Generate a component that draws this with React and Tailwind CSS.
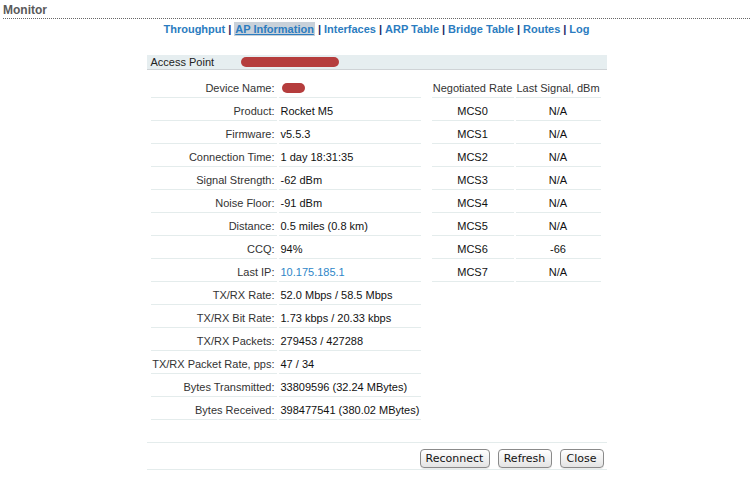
const navItems = ['Throughput', 'AP Information', 'Interfaces', 'ARP Table', 'Bridge Table', 'Routes', 'Log'];

const rows = [
  { label: 'Device Name:', value: null, redacted: true },
  { label: 'Product:', value: 'Rocket M5' },
  { label: 'Firmware:', value: 'v5.5.3' },
  { label: 'Connection Time:', value: '1 day 18:31:35' },
  { label: 'Signal Strength:', value: '-62 dBm' },
  { label: 'Noise Floor:', value: '-91 dBm' },
  { label: 'Distance:', value: '0.5 miles (0.8 km)' },
  { label: 'CCQ:', value: '94%' },
  { label: 'Last IP:', value: '10.175.185.1', link: true },
  { label: 'TX/RX Rate:', value: '52.0 Mbps / 58.5 Mbps' },
  { label: 'TX/RX Bit Rate:', value: '1.73 kbps / 20.33 kbps' },
  { label: 'TX/RX Packets:', value: '279453 / 427288' },
  { label: 'TX/RX Packet Rate, pps:', value: '47 / 34' },
  { label: 'Bytes Transmitted:', value: '33809596 (32.24 MBytes)' },
  { label: 'Bytes Received:', value: '398477541 (380.02 MBytes)' },
];

const rates = [
  ['MCS0', 'N/A'],
  ['MCS1', 'N/A'],
  ['MCS2', 'N/A'],
  ['MCS3', 'N/A'],
  ['MCS4', 'N/A'],
  ['MCS5', 'N/A'],
  ['MCS6', '-66'],
  ['MCS7', 'N/A'],
];

const cell = 'h-[23px] border-b border-[#e4ecec] pt-[6px] leading-[14px] whitespace-nowrap';

const Button = ({ children, width }) => (
  <button
    className={`h-[19px] ${width} rounded-[4px] border border-[#8a8a8a] bg-gradient-to-b from-white to-[#e4e4e4] text-[11px] leading-[17px] text-[#111] shadow-[0_1px_0_rgba(0,0,0,0.08)] [font-family:'DejaVu_Sans',sans-serif]`}
  >
    {children}
  </button>
);

export default function App() {
  return (
    <div className="w-[753px] h-[479px] bg-white text-[11px] text-[#222] [font-family:'Liberation_Sans',Arial,sans-serif]">
      {/* Title */}
      <div className="mx-[3px] pt-[3px] border-b border-dotted border-[#666]">
        <div className="text-[12px] font-bold leading-[15px] text-[#5a5a5a]">Monitor</div>
      </div>

      {/* Sub nav */}
      <div className="mt-[3px] flex justify-center text-[11px] font-bold leading-[14px] text-[#2b7cc0]">
        {navItems.map((item, i) => (
          <span key={item} className="flex items-center">
            {i > 0 && <span className="mx-[3px] text-[#1c2a66]">|</span>}
            {item === 'AP Information' ? (
              <span className="bg-[#c9d1d9] px-[1px] underline">{item}</span>
            ) : (
              <span>{item}</span>
            )}
          </span>
        ))}
      </div>

      <div className="mx-auto mt-[19px] w-[460px]">
        {/* Section header */}
        <div className="flex h-[15px] items-center border-b border-[#cfd3d6] bg-[#e6eef0] pl-[4px] leading-[14px]">
          <span className="w-[90px]">Access Point</span>
          <span className="h-[10px] w-[98px] rounded-full bg-[#b53d3d]" />
        </div>

        <div className="mt-[5px] flex">
          {/* Left table */}
          <div className="w-[274px]">
            {rows.map((r) => (
              <div key={r.label} className="flex">
                <div className={`${cell} ml-[4px] w-[126px] pr-[2px] text-right text-[#333]`}>{r.label}</div>
                <div className={`${cell} ml-[2px] w-[142px] pl-[2px] ${r.link ? 'text-[#2e86c8]' : 'text-[#111]'}`}>
                  {r.redacted ? (
                    <span className="mt-[2px] ml-[1px] block h-[10px] w-[23px] rounded-full bg-[#b53d3d]" />
                  ) : (
                    r.value
                  )}
                </div>
              </div>
            ))}
          </div>

          {/* Right table */}
          <div className="ml-[11px]">
            <div className="flex text-[#333]">
              <div className={`${cell} w-[82px] text-center`}>Negotiated Rate</div>
              <div className={`${cell} ml-[2px] w-[85px] text-center`}>Last Signal, dBm</div>
            </div>
            {rates.map(([mcs, sig]) => (
              <div key={mcs} className="flex text-[#111]">
                <div className={`${cell} w-[82px] text-center`}>{mcs}</div>
                <div className={`${cell} ml-[2px] w-[85px] text-center`}>{sig}</div>
              </div>
            ))}
          </div>
        </div>

        {/* Footer buttons */}
        <div className="mt-[22px] flex justify-end gap-[8px] border-y border-[#e4ecec] pr-[3px] pt-[6px] pb-[1px]">
          <Button width="w-[70px]">Reconnect</Button>
          <Button width="w-[54px]">Refresh</Button>
          <Button width="w-[44px]">Close</Button>
        </div>
      </div>
    </div>
  );
}
